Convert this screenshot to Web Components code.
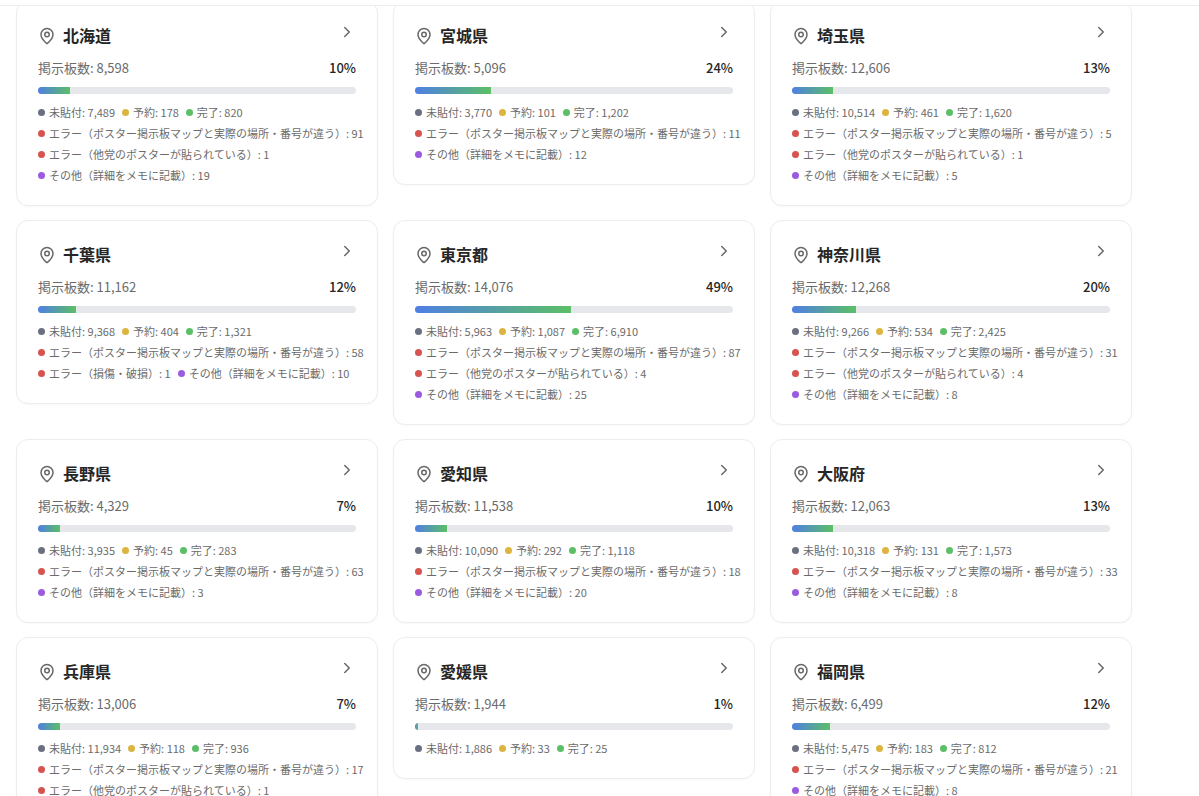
<!DOCTYPE html>
<html lang="ja">
<head>
<meta charset="utf-8">
<meta name="viewport" content="width=device-width, initial-scale=1">
<title>ポスター掲示板マップ</title>
<style>
  body {
    margin: 0;
    background: #fff;
    color: #262626;
    font-family: "Noto Sans CJK JP", "Noto Sans", sans-serif;
  }
</style>
</head>
<body>
<board-page></board-page>

<template id="page-template">
  <style>
    :host { display: flex; flex-direction: column; height: 100vh; overflow: hidden; }
    header {
      position: relative;
      z-index: 1;
      flex: none;
      height: 5px;
      background: #fff;
      border-bottom: 1px solid #ededed;
    }
    main {
      display: grid;
      grid-template-columns: repeat(3, minmax(0, 1fr));
      align-items: start;
      gap: 14px 15px;
      margin-top: -5px;
      padding: 0 67px 0 16px;
    }
  </style>
  <header></header>
  <main></main>
</template>

<template id="card-template">
  <style>
    :host { display: block; }
    a {
      display: block;
      padding: 21px 21px 23px;
      border: 1px solid #ededed;
      border-radius: 12px;
      background: #fff;
      box-shadow: 0 1px 2px rgba(0, 0, 0, 0.03);
      color: inherit;
      text-decoration: none;
    }
    .head, .count { display: flex; justify-content: space-between; }
    .head { align-items: flex-start; margin-bottom: 11px; }
    h3 {
      display: flex;
      align-items: center;
      gap: 7px;
      margin: 0;
      font-size: 16px;
      font-weight: 700;
      line-height: 25px;
    }
    svg {
      display: block;
      width: 18px;
      height: 18px;
      fill: none;
      stroke: #686868;
      stroke-width: 2;
      stroke-linecap: round;
      stroke-linejoin: round;
    }
    .count {
      margin-bottom: 10px;
      color: #6b6b6b;
      font-size: 13px;
      line-height: 18px;
    }
    .percent { color: #262626; font-weight: 500; }
    ul {
      display: flex;
      flex-wrap: wrap;
      gap: 7px;
      margin: 11px 0 0;
      padding: 0;
      list-style: none;
    }
  </style>
  <a href="#">
    <div class="head">
      <h3>
        <svg viewBox="0 0 24 24" aria-hidden="true"><path d="M20 10c0 4.993-5.539 10.193-7.399 11.799a1 1 0 0 1-1.202 0C9.539 20.193 4 14.993 4 10a8 8 0 0 1 16 0"/><circle cx="12" cy="10" r="3"/></svg>
        <slot></slot>
      </h3>
      <svg viewBox="0 0 24 24" aria-hidden="true"><path d="m9 18 6-6-6-6"/></svg>
    </div>
    <div class="count"><span class="total"></span><span class="percent"></span></div>
    <progress-bar></progress-bar>
    <ul></ul>
  </a>
</template>

<template id="bar-template">
  <style>
    :host { display: block; height: 7px; border-radius: 4px; overflow: hidden; background: #e5e7eb; }
    div { height: 100%; background: linear-gradient(to right, #4f7fe3, #5cbf66); }
  </style>
  <div></div>
</template>

<template id="status-template">
  <style>
    :host {
      display: flex;
      align-items: center;
      gap: 4px;
      color: #6b6b6b;
      font-size: 11px;
      line-height: 14px;
      white-space: nowrap;
    }
    i { flex: none; width: 7px; height: 7px; border-radius: 50%; background: var(--dot); }
  </style>
  <i></i><span><slot></slot></span>
</template>

<script>
  // importNode upgrades nested custom elements at once, so their setters are ready to use.
  const attach = (el, id) => {
    const root = el.attachShadow({ mode: "open" });
    root.append(document.importNode(document.getElementById(id).content, true));
    return root;
  };

  const STATUS = {
    todo: ["未貼付", "#6b7080"],
    reserved: ["予約", "#dcb440"],
    done: ["完了", "#5cbf68"],
    mismatch: ["エラー（ポスター掲示板マップと実際の場所・番号が違う）", "#d65350"],
    otherParty: ["エラー（他党のポスターが貼られている）", "#d65350"],
    damaged: ["エラー（損傷・破損）", "#d65350"],
    other: ["その他（詳細をメモに記載）", "#9b5be0"]
  };

  const PREFECTURES = [
    ["北海道", 8598, 10, { todo: 7489, reserved: 178, done: 820, mismatch: 91, otherParty: 1, other: 19 }],
    ["宮城県", 5096, 24, { todo: 3770, reserved: 101, done: 1202, mismatch: 11, other: 12 }],
    ["埼玉県", 12606, 13, { todo: 10514, reserved: 461, done: 1620, mismatch: 5, otherParty: 1, other: 5 }],
    ["千葉県", 11162, 12, { todo: 9368, reserved: 404, done: 1321, mismatch: 58, damaged: 1, other: 10 }],
    ["東京都", 14076, 49, { todo: 5963, reserved: 1087, done: 6910, mismatch: 87, otherParty: 4, other: 25 }],
    ["神奈川県", 12268, 20, { todo: 9266, reserved: 534, done: 2425, mismatch: 31, otherParty: 4, other: 8 }],
    ["長野県", 4329, 7, { todo: 3935, reserved: 45, done: 283, mismatch: 63, other: 3 }],
    ["愛知県", 11538, 10, { todo: 10090, reserved: 292, done: 1118, mismatch: 18, other: 20 }],
    ["大阪府", 12063, 13, { todo: 10318, reserved: 131, done: 1573, mismatch: 33, other: 8 }],
    ["兵庫県", 13006, 7, { todo: 11934, reserved: 118, done: 936, mismatch: 17, otherParty: 1 }],
    ["愛媛県", 1944, 1, { todo: 1886, reserved: 33, done: 25 }],
    ["福岡県", 6499, 12, { todo: 5475, reserved: 183, done: 812, mismatch: 21, other: 8 }]
  ];

  const format = n => n.toLocaleString("en-US");

  customElements.define("progress-bar", class extends HTMLElement {
    static observedAttributes = ["value"];
    constructor() { super(); this.fill = attach(this, "bar-template").querySelector("div"); }
    attributeChangedCallback(name, old, value) {
      this.fill.style.width = value + "%";
    }
    connectedCallback() {
      this.setAttribute("role", "progressbar");
      this.setAttribute("aria-valuenow", this.getAttribute("value"));
    }
  });

  customElements.define("status-count", class extends HTMLElement {
    constructor() { super(); attach(this, "status-template"); }
  });

  customElements.define("prefecture-card", class extends HTMLElement {
    constructor() { super(); this.root = attach(this, "card-template"); }
    set data([name, total, percent, counts]) {
      this.textContent = name;
      this.root.querySelector(".total").textContent = "掲示板数: " + format(total);
      this.root.querySelector(".percent").textContent = percent + "%";
      this.root.querySelector("progress-bar").setAttribute("value", percent);
      const list = this.root.querySelector("ul");
      for (const [key, n] of Object.entries(counts)) {
        const [label, colour] = STATUS[key];
        const li = document.createElement("li");
        const item = document.createElement("status-count");
        item.style.setProperty("--dot", colour);
        item.textContent = label + ": " + format(n);
        li.append(item);
        list.append(li);
      }
    }
  });

  customElements.define("board-page", class extends HTMLElement {
    constructor() {
      super();
      const main = attach(this, "page-template").querySelector("main");
      for (const row of PREFECTURES) {
        const card = document.createElement("prefecture-card");
        card.data = row;
        main.append(card);
      }
    }
  });
</script>
</body>
</html>
